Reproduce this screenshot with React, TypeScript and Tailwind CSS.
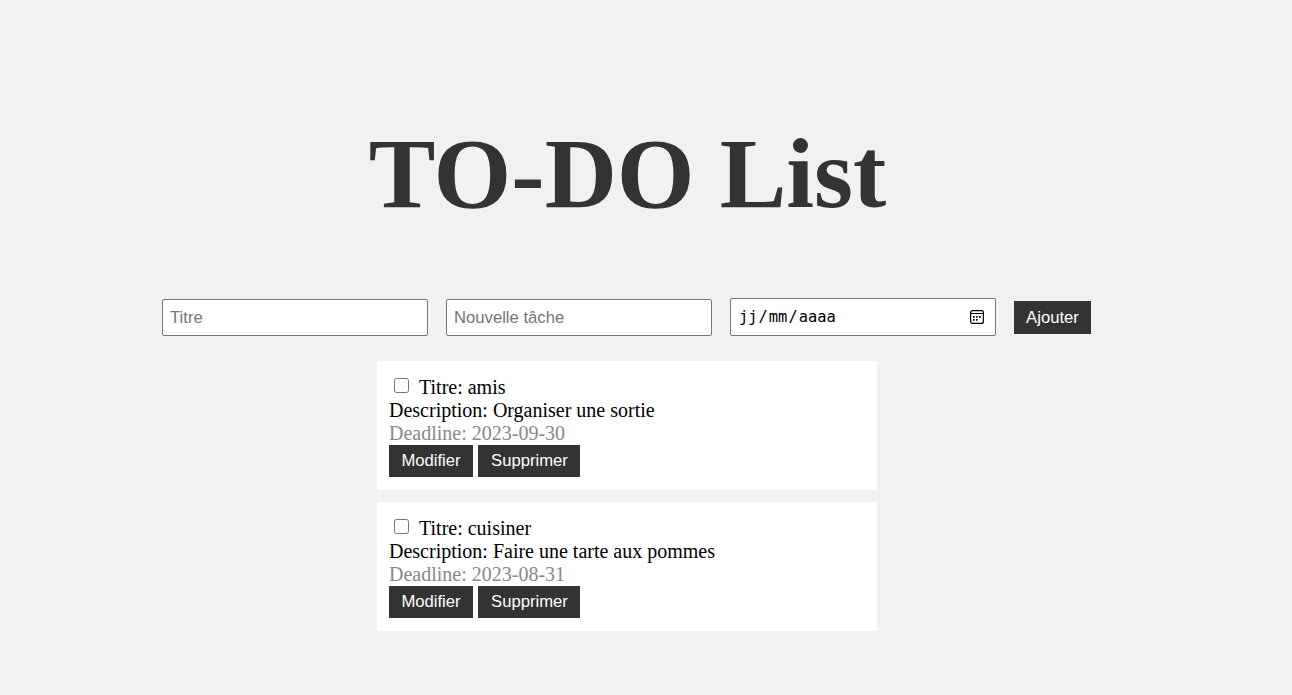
import React from "react";

type Task = { title: string; description: string; deadline: string };

const tasks: Task[] = [
  { title: "amis", description: "Organiser une sortie", deadline: "2023-09-30" },
  { title: "cuisiner", description: "Faire une tarte aux pommes", deadline: "2023-08-31" },
];

const sans = "font-['Liberation_Sans',Arial,sans-serif] text-[16.67px]";

function TextField({ placeholder }: { placeholder: string }) {
  return (
    <input
      type="text"
      placeholder={placeholder}
      className={`mt-px h-[37px] w-[266px] rounded-[2px] border border-[#767676] bg-white px-[7px] text-black placeholder:text-[#757575] ${sans}`}
    />
  );
}

function CalendarIcon() {
  return (
    <svg width="14" height="14" viewBox="0 0 14 14" aria-hidden="true">
      <rect x="0.6" y="0.6" width="12.8" height="12.8" rx="2" fill="none" stroke="#000" strokeWidth="1.2" />
      <path d="M0.5 3.5h13" stroke="#000" strokeWidth="1" />
      <path d="M3 6h1.7v1.7H3zM6 6h1.7v1.7H6zM9 6h1.7v1.7H9zM3 9h1.7v1.7H3zM6 9h1.7v1.7H6z" fill="#111" />
    </svg>
  );
}

function DateField() {
  return (
    <div className="flex h-[38px] w-[266px] items-center justify-between rounded-[2px] border border-[#767676] bg-white pr-[11px] pl-[7px]">
      <div className="flex font-['DejaVu_Sans_Mono',monospace] text-[15.4px] leading-[18px] text-black">
        <span className="px-px">jj</span>
        <span>/</span>
        <span className="px-px">mm</span>
        <span>/</span>
        <span className="px-px">aaaa</span>
      </div>
      <CalendarIcon />
    </div>
  );
}

function TaskCard({ task }: { task: Task }) {
  return (
    <li className="h-[129px] w-[500px] bg-white px-3 pt-[15px] leading-[23px]">
      <div className="flex">
        <input
          type="checkbox"
          aria-label={task.title}
          className="mt-[2px] mr-[10px] ml-[5px] size-[15px] appearance-none rounded-[2.5px] border border-[#767676] bg-white checked:bg-[#0075ff]"
        />
        <span>Titre: {task.title}</span>
      </div>
      <div>Description: {task.description}</div>
      <div className="text-[#888]">Deadline: {task.deadline}</div>
      <div className="flex gap-[5px]">
        <button className={`h-8 w-[84px] bg-[#333] pb-[2px] leading-[19px] text-white ${sans}`}>Modifier</button>
        <button className={`h-8 w-[102px] bg-[#333] pb-[2px] pl-px leading-[19px] text-white ${sans}`}>Supprimer</button>
      </div>
    </li>
  );
}

export default function App() {
  return (
    <main className="flex h-[695px] w-full flex-col items-center overflow-hidden bg-[#f1f1f1] pr-[38px] font-['Liberation_Serif',serif] text-[20px] text-black">
      <h1 className="mt-[116px] h-[182px] pl-px text-[100px] leading-[115px] font-bold text-[#333]">TO-DO List</h1>
      <form className="flex w-[930px] gap-[18px]" onSubmit={(e) => e.preventDefault()}>
        <TextField placeholder="Titre" />
        <TextField placeholder="Nouvelle tâche" />
        <DateField />
        <button className={`mt-[3px] h-[33px] w-[77px] bg-[#333] text-white ${sans}`}>Ajouter</button>
      </form>
      <ul className="mt-[25px] flex flex-col gap-3">
        {tasks.map((task) => (
          <TaskCard key={task.title} task={task} />
        ))}
      </ul>
    </main>
  );
}
